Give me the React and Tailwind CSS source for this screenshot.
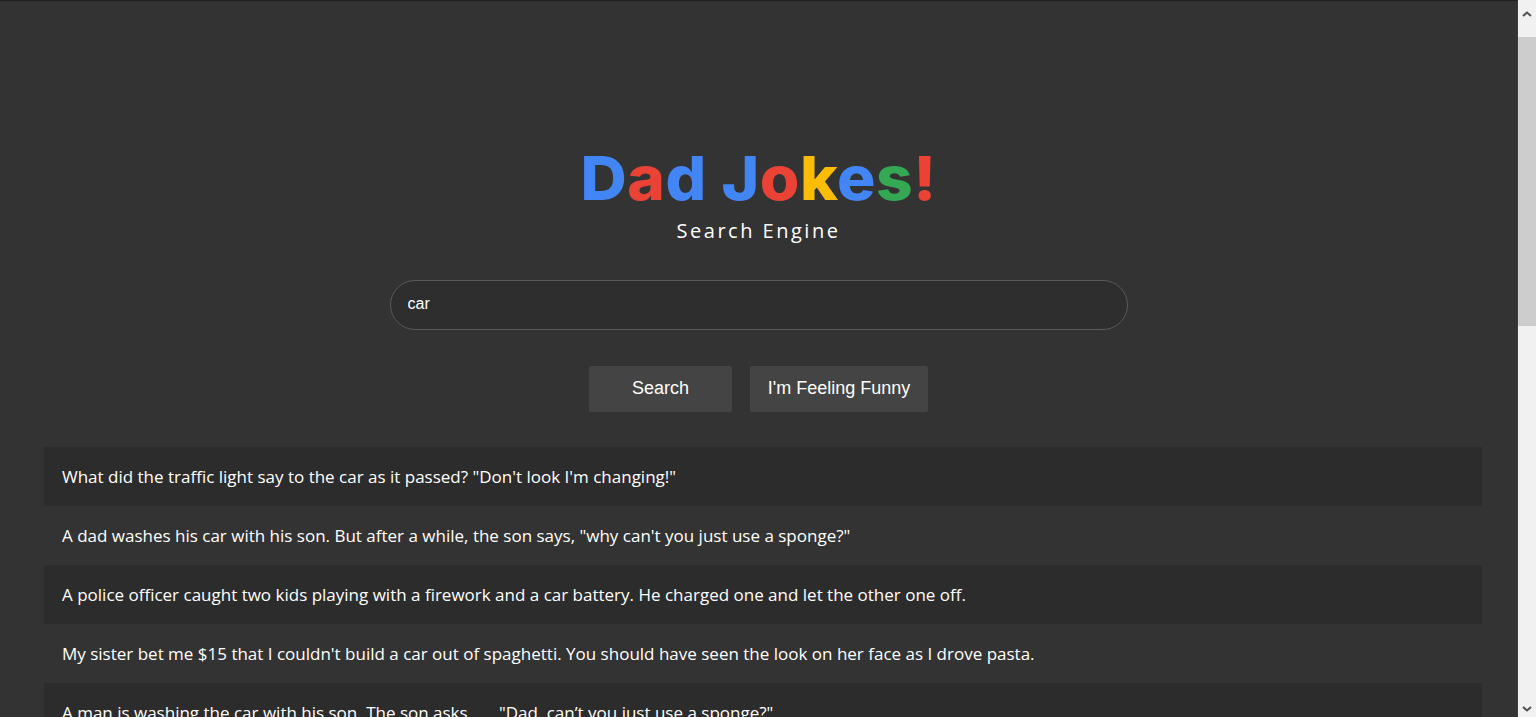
import React, { useState } from "react";

const jokes = [
  `What did the traffic light say to the car as it passed? "Don't look I'm changing!"`,
  `A dad washes his car with his son. But after a while, the son says, "why can't you just use a sponge?"`,
  "A police officer caught two kids playing with a firework and a car battery. He charged one and let the other one off.",
  "My sister bet me $15 that I couldn't build a car out of spaghetti. You should have seen the look on her face as I drove pasta.",
  `A man is washing the car with his son. The son asks......."Dad, can\u2019t you just use a sponge?"`,
];

const titleLetters = [
  ["D", "text-[#4285f4]"],
  ["a", "text-[#ea4335]"],
  ["d", "text-[#4285f4]"],
  [" ", ""],
  ["J", "text-[#4285f4]"],
  ["o", "text-[#ea4335]"],
  ["k", "text-[#fbbc05]"],
  ["e", "text-[#4285f4]"],
  ["s", "text-[#34a853]"],
  ["!", "text-[#ea4335]"],
];

const Scrollbar = () => (
  <div className="w-[18px] shrink-0 flex flex-col bg-[#f1f1f1]">
    <div className="h-[37px] shrink-0 flex items-center justify-center pb-[9px]">
      <svg width="10" height="6" viewBox="0 0 10 6">
        <path d="M1 5 L5 1.5 L9 5" fill="none" stroke="#505050" strokeWidth="2" />
      </svg>
    </div>
    <div className="h-[289px] shrink-0 bg-[#cdcdcd]" />
    <div className="flex-1 flex items-end justify-center pb-[5px]">
      <svg width="10" height="6" viewBox="0 0 10 6">
        <path d="M1 1 L5 4.5 L9 1" fill="none" stroke="#505050" strokeWidth="2" />
      </svg>
    </div>
  </div>
);

const App = () => {
  const [query, setQuery] = useState("car");

  return (
    <div className="h-screen flex overflow-hidden bg-[#333333]">
      <div className="flex-1 min-w-0 overflow-hidden border-t border-t-[#1f1f1f] border-r border-r-[#3f3f3f] flex flex-col items-center pt-[143px]">
        <h1 className="font-['Inter','Liberation_Sans',sans-serif] font-extrabold text-[61px] leading-[68px] whitespace-pre tracking-[0.5px] scale-x-[1.05]">
          {titleLetters.map(([letter, color], i) => (
            <span key={i} className={color}>
              {letter}
            </span>
          ))}
        </h1>
        <p className="mt-[5px] font-['Open_Sans',sans-serif] text-[20px] leading-[27px] tracking-[2.5px] text-white">
          Search Engine
        </p>
        <input
          value={query}
          onChange={(e) => setQuery(e.target.value)}
          className="mt-[36px] w-[738px] h-[50px] shrink-0 rounded-[25px] border border-[#5a5a5a] bg-[#2e2e2e] pl-[17px] pr-4 pb-[3px] font-['Liberation_Sans',sans-serif] text-[16px] text-white outline-none"
        />
        <div className="mt-9 flex gap-[18px]">
          <button className="w-[143px] h-[46px] pb-[2px] rounded-[2px] bg-[#444444] font-['Liberation_Sans',sans-serif] text-[18px] text-white">
            Search
          </button>
          <button className="w-[178px] h-[46px] pb-[2px] rounded-[2px] bg-[#444444] font-['Liberation_Sans',sans-serif] text-[18px] text-white">
            I'm Feeling Funny
          </button>
        </div>
        <ul className="mt-[35px] ml-[44px] self-start w-[1438px] shrink-0">
          {jokes.map((joke, i) => (
            <li
              key={i}
              className={`h-[59px] flex items-center px-[18px] pt-[1px] font-['Open_Sans',sans-serif] text-[17px] text-white whitespace-nowrap ${
                i % 2 === 0 ? "bg-[#2c2c2c]" : "bg-[#333333]"
              }`}
            >
              {joke}
            </li>
          ))}
        </ul>
      </div>
      <Scrollbar />
    </div>
  );
};

export default App;
